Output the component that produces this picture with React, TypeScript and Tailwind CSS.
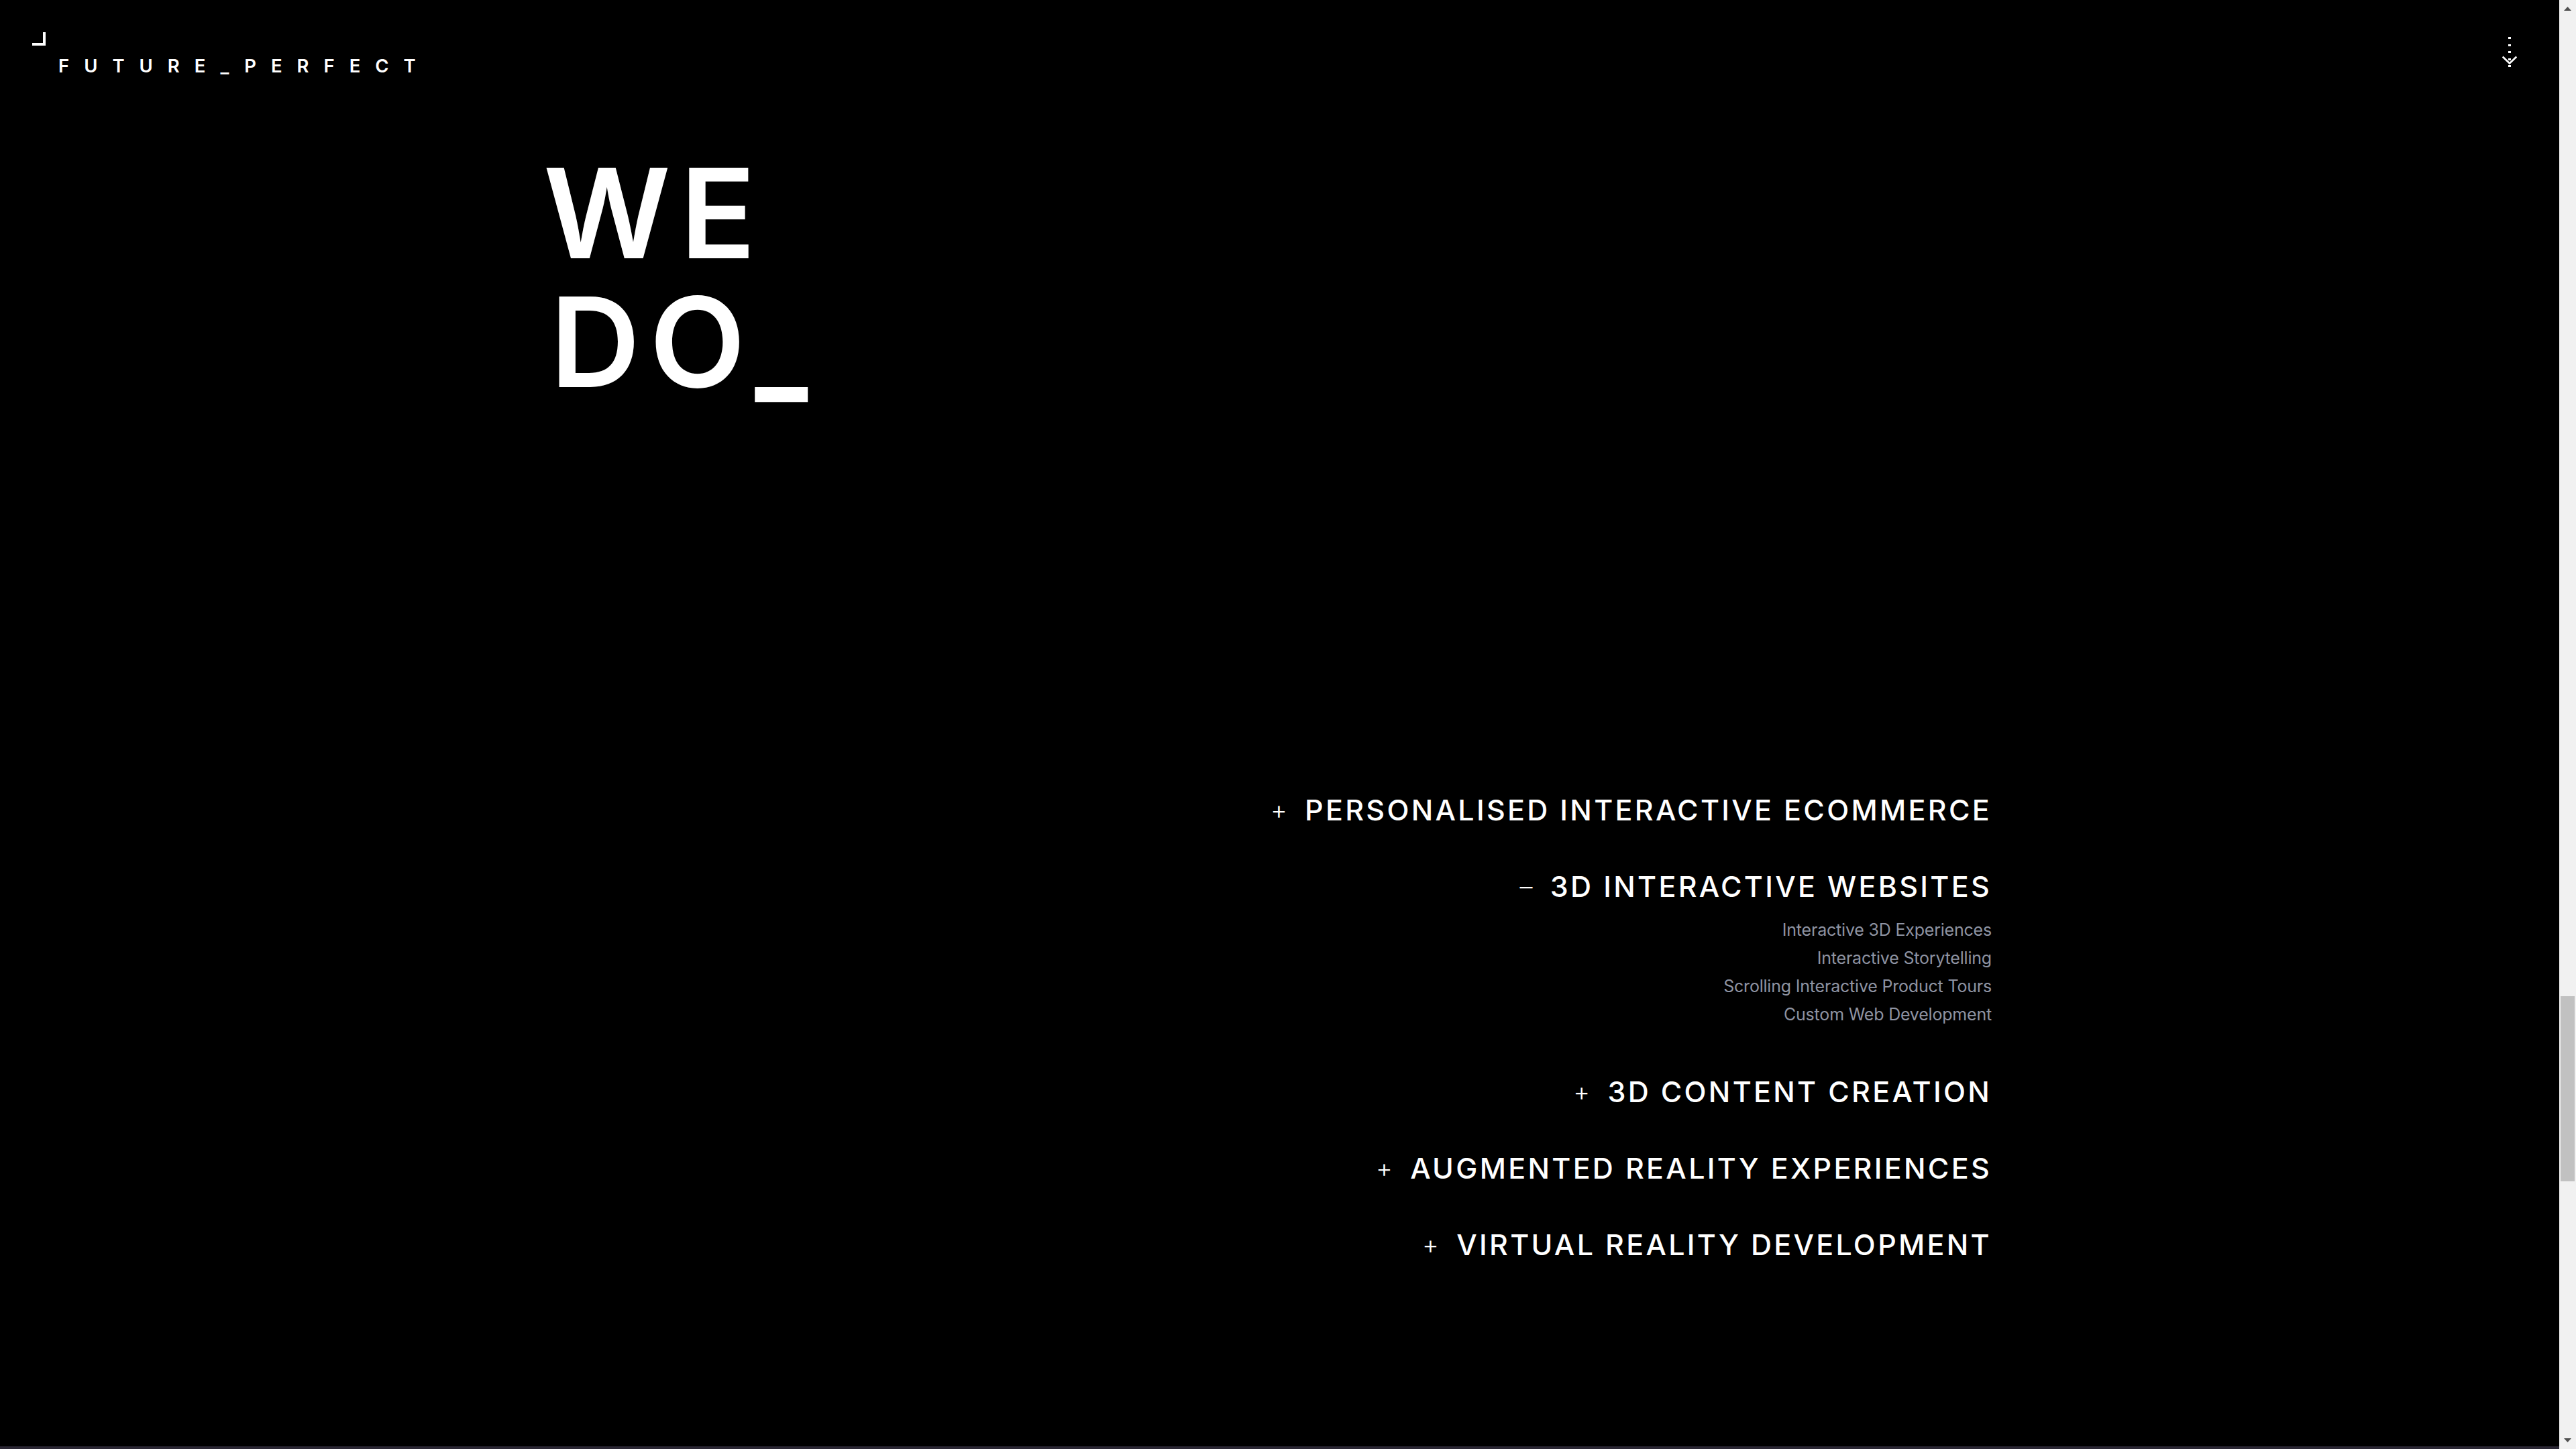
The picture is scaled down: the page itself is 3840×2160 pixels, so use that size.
const services = [
  { title: 'PERSONALISED INTERACTIVE ECOMMERCE', items: [] as string[] },
  {
    title: '3D INTERACTIVE WEBSITES',
    items: [
      'Interactive 3D Experiences',
      'Interactive Storytelling',
      'Scrolling Interactive Product Tours',
      'Custom Web Development',
    ],
  },
  { title: '3D CONTENT CREATION', items: [] as string[] },
  { title: 'AUGMENTED REALITY EXPERIENCES', items: [] as string[] },
  { title: 'VIRTUAL REALITY DEVELOPMENT', items: [] as string[] },
]

function Scrollbar() {
  return (
    <div className="flex h-full w-[25px] shrink-0 flex-col items-center bg-[#f1f1f1]">
      <svg width="11" height="6" viewBox="0 0 11 6" className="mt-[10px] shrink-0">
        <path d="M5.5 0 11 6H0z" fill="#505050" />
      </svg>
      <div className="mt-[1469px] h-[276px] w-[21px] shrink-0 bg-[#c1c1c1]" />
      <svg width="11" height="6" viewBox="0 0 11 6" className="mt-[383px] shrink-0">
        <path d="M0 0h11L5.5 6z" fill="#505050" />
      </svg>
    </div>
  )
}

export default function App() {
  return (
    <div className="flex h-screen w-screen overflow-hidden bg-black font-['Inter',sans-serif] text-white">
      <div className="flex h-full min-w-0 flex-1 flex-col border-b-4 border-[#2a2633]">
        {/* Header */}
        <header className="flex h-[222px] shrink-0 items-start justify-between pl-12 pr-[63px] pt-12">
          <div>
            <div className="h-5 w-5 border-b-4 border-r-4 border-white" />
            <div className="ml-[39px] mt-4 text-[27.5px] font-semibold leading-[28px] tracking-[22px]">
              FUTURE_PERFECT
            </div>
          </div>
          <svg width="22" height="46" viewBox="0 0 22 46" className="mt-[7px]" fill="none">
            <g fill="white">
              <rect x="9" y="0" width="4" height="3" />
              <rect x="9" y="11" width="4" height="3" />
              <rect x="9" y="21" width="4" height="3" />
              <rect x="9" y="32" width="4" height="3" />
              <rect x="9" y="42" width="4" height="3" />
            </g>
            <path d="M0.7 29.5 11 39.5 21.3 29.5" stroke="white" strokeWidth="2.6" />
          </svg>
        </header>

        {/* Main */}
        <main className="flex flex-col pl-[810px] pr-[846px]">
          <h1 className="text-[186px] font-semibold leading-[192px] tracking-[14px]">
            WE
            <br />
            <span className="ml-[10px]">DO</span>
            <span className="text-[160px] font-black leading-none tracking-normal">_</span>
          </h1>

          <ul className="mt-[571px] flex flex-col items-end gap-[54px]">
            {services.map(service => (
              <li key={service.title} className={service.items.length ? 'mb-[10px]' : ''}>
                <div className="flex items-center justify-end gap-[23px] text-[43px] font-medium leading-[60px] tracking-[3.3px]">
                  <span className="text-[38px] font-light leading-none">
                    {service.items.length ? '–' : '+'}
                  </span>
                  <span>{service.title}</span>
                </div>
                {service.items.length > 0 && (
                  <div className="mt-[14px] flex flex-col items-end text-[25px] leading-[42px] tracking-[-0.2px] text-[#8e93a2]">
                    {service.items.map(item => (
                      <span key={item}>{item}</span>
                    ))}
                  </div>
                )}
              </li>
            ))}
          </ul>
        </main>
      </div>
      <Scrollbar />
    </div>
  )
}
